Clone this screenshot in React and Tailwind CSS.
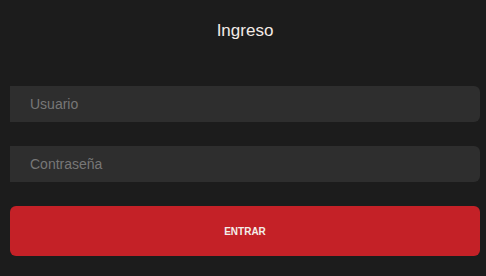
import React, { useState } from 'react';

const LoginForm = () => {
  const [user, setUser] = useState('');
  const [pass, setPass] = useState('');

  const handleSubmit = e => {
    e.preventDefault();
  };

  return (
    <div
      className="min-h-screen w-full bg-[#1c1c1c] pl-[10px] pr-[6px]"
      style={{ fontFamily: '"Liberation Sans", Arial, sans-serif' }}
    >
      <div className="h-[62px] flex items-center justify-center">
        <h2 className="text-[17px] text-[#f3ebe6]">Ingreso</h2>
      </div>

      <form onSubmit={handleSubmit} className="mt-[24px] flex flex-col gap-[24px]">
        <input
          type="text"
          name="user"
          value={user}
          onChange={e => setUser(e.target.value)}
          placeholder="Usuario"
          className="w-full h-[36px] px-[20px] bg-[#2e2e2e] rounded-r-[6px] text-[14px] text-[#e5e5e5] placeholder:text-[#777777] outline-none"
        />
        <input
          type="password"
          name="pass"
          value={pass}
          onChange={e => setPass(e.target.value)}
          placeholder="Contraseña"
          className="w-full h-[36px] px-[20px] bg-[#2e2e2e] rounded-r-[6px] text-[14px] text-[#e5e5e5] placeholder:text-[#777777] outline-none"
        />
        <button
          type="submit"
          className="w-full h-[50px] rounded-[6px] bg-[#c42127] text-[10px] font-bold text-[#f3eee9]"
        >
          ENTRAR
        </button>
      </form>
    </div>
  );
};

export default LoginForm;
